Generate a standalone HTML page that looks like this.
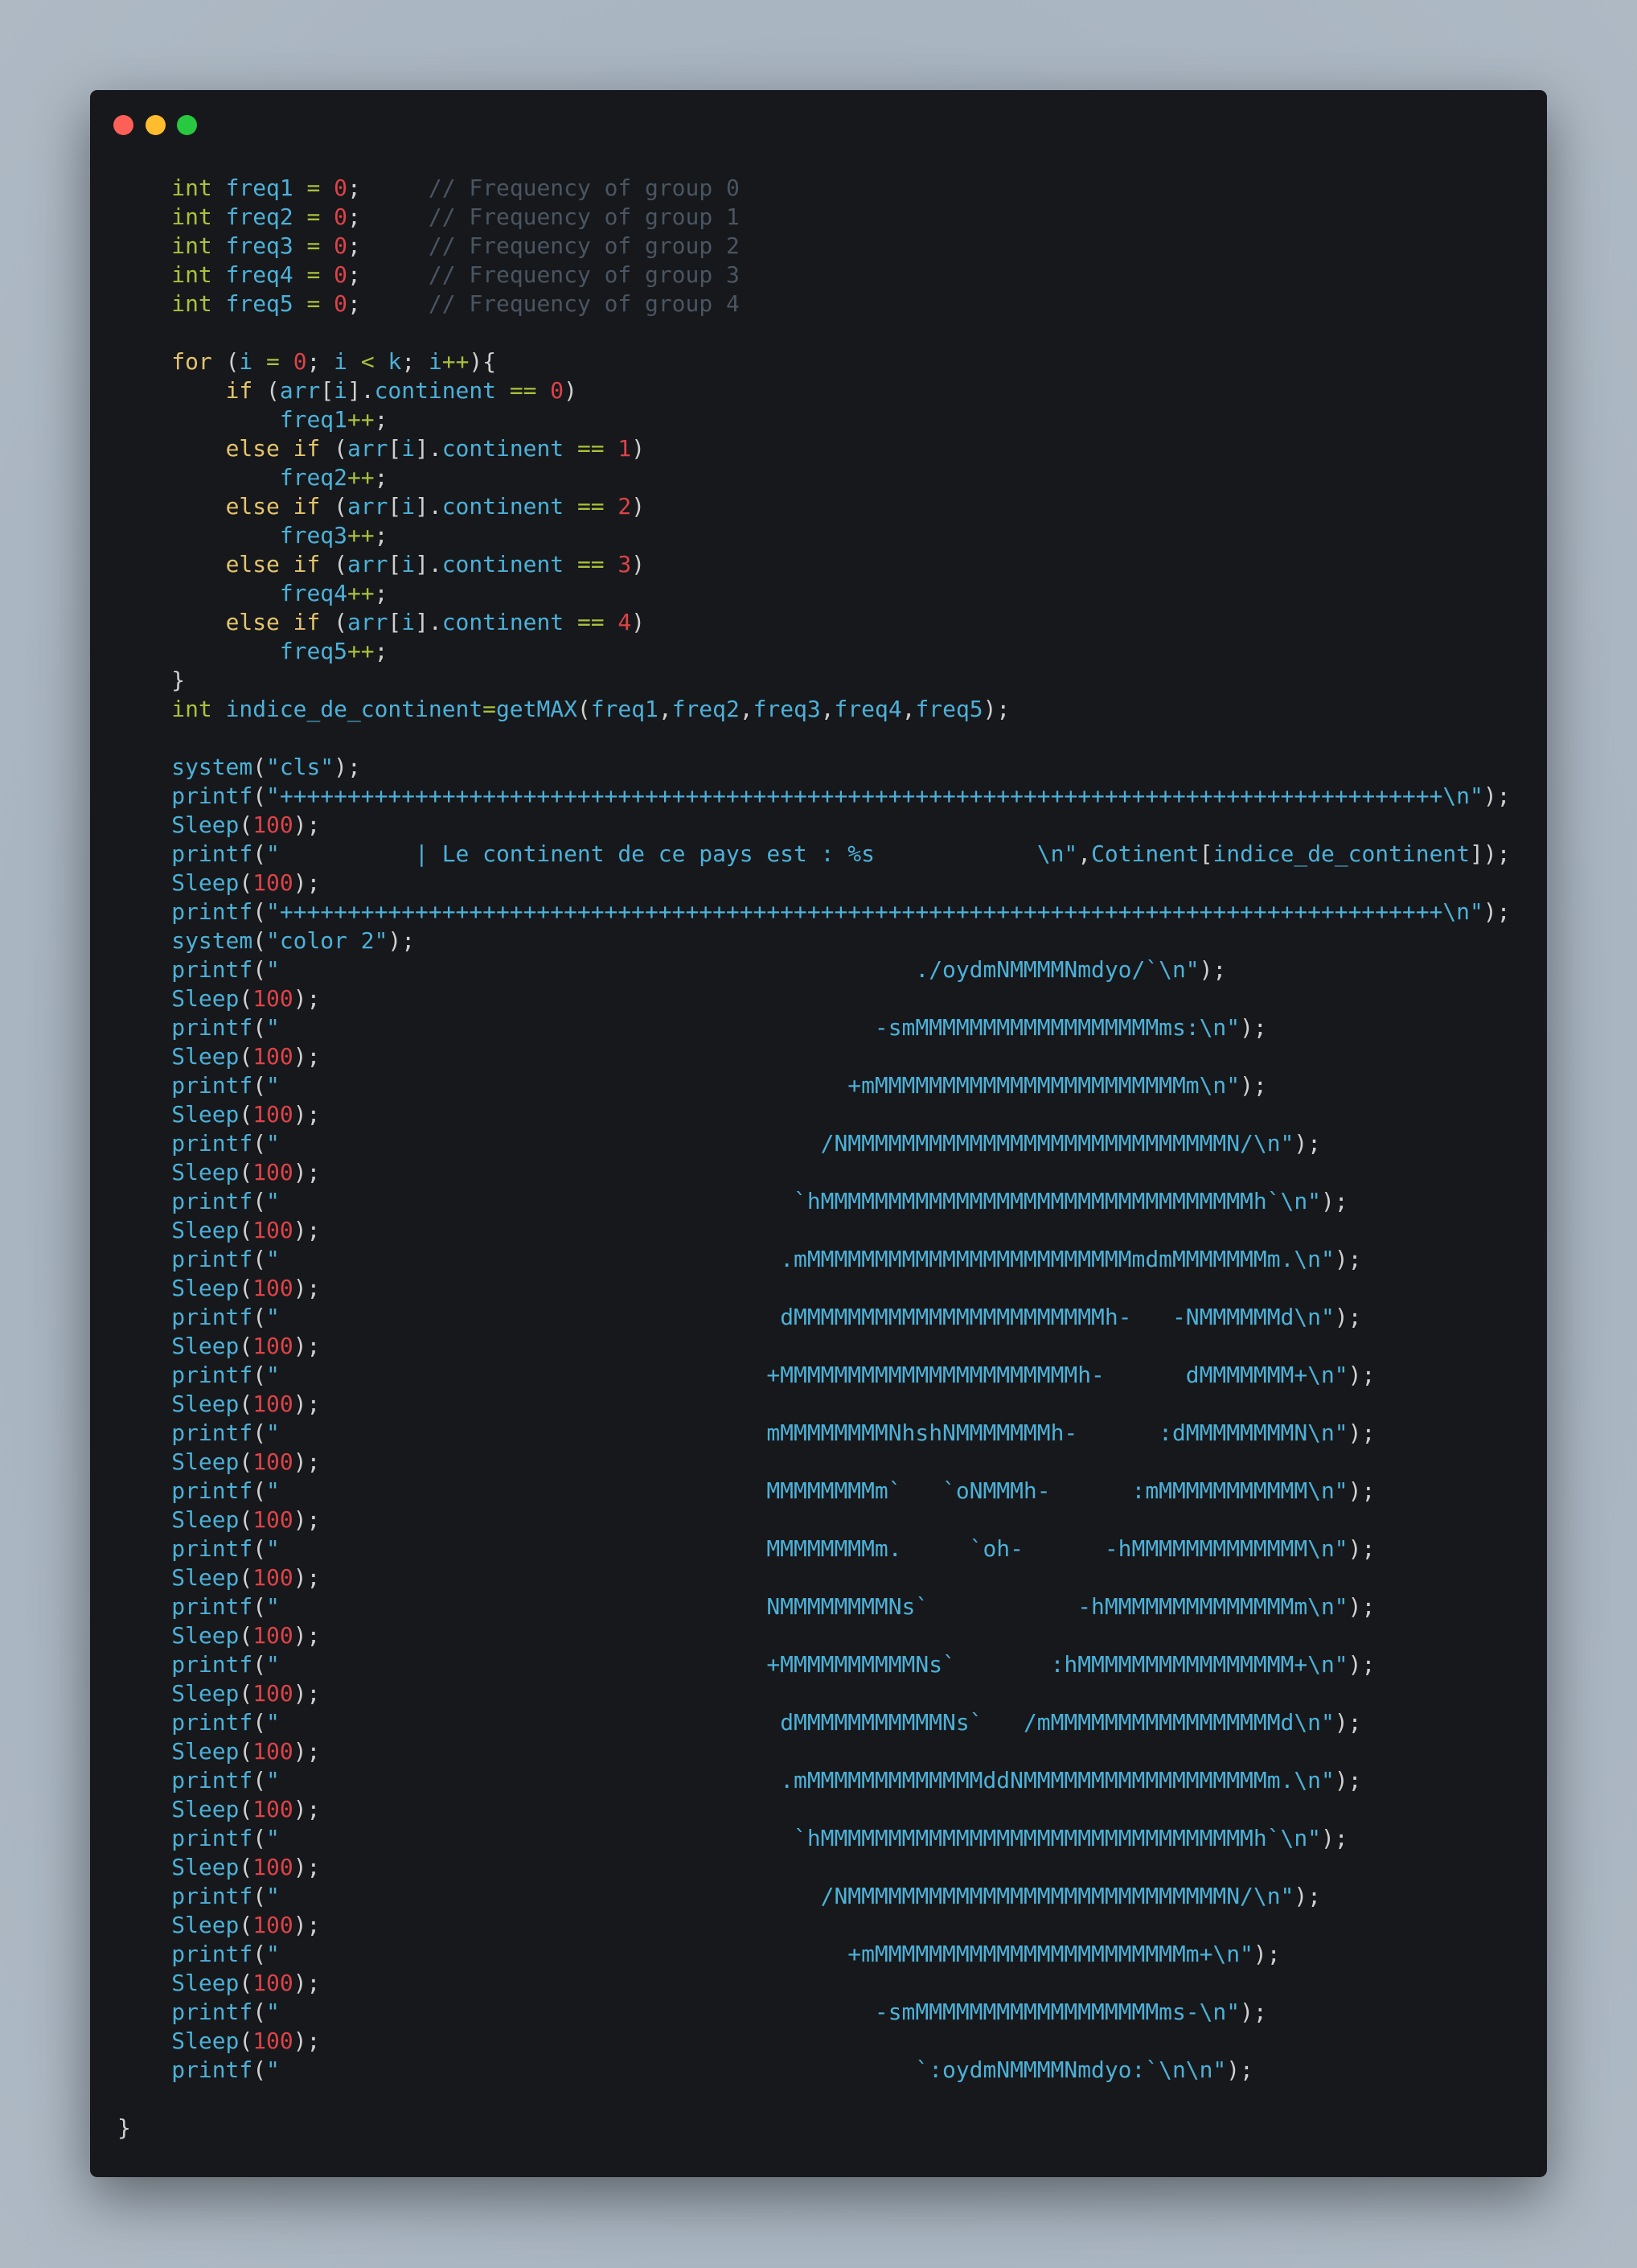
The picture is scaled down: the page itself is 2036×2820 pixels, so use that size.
<!DOCTYPE html>
<html><head><meta charset="utf-8"><style>
html,body{margin:0;padding:0}
body{width:2036px;height:2820px;background:radial-gradient(ellipse at 50% 50%,#98a4b0 0%,#a9b5c1 70%,#aeb9c4 100%);position:relative;overflow:hidden}
.win{position:absolute;left:112px;top:112px;width:1812px;height:2595px;background:#17181b;border-radius:9px;box-shadow:0 25px 70px rgba(0,0,0,.45)}
.dot{position:absolute;top:143px;width:25px;height:25px;border-radius:50%}
pre{position:absolute;left:146px;top:216px;margin:0;font-family:"DejaVu Sans Mono","Liberation Mono",monospace;font-size:27.95px;line-height:36px;color:#d0d0d0}
i{display:inline-block;font-style:normal}
.k{color:#a8c23c}.y{color:#e3c46c}.b{color:#4cb1d9}.r{color:#dc4348}.g{color:#a8c23c}.c{color:#4a5562}.w{color:#d0d0d0}
</style></head><body>
<div class="win"></div>
<div class="dot" style="left:141px;background:#fe5f57"></div>
<div class="dot" style="left:181px;background:#febc2e"></div>
<div class="dot" style="left:220px;background:#28c840"></div>
<pre>    <span class="k">int</span> <span class="b">freq1</span> <span class="g">=</span> <span class="r">0</span>;     <span class="c">// Frequency of group 0</span>
    <span class="k">int</span> <span class="b">freq2</span> <span class="g">=</span> <span class="r">0</span>;     <span class="c">// Frequency of group 1</span>
    <span class="k">int</span> <span class="b">freq3</span> <span class="g">=</span> <span class="r">0</span>;     <span class="c">// Frequency of group 2</span>
    <span class="k">int</span> <span class="b">freq4</span> <span class="g">=</span> <span class="r">0</span>;     <span class="c">// Frequency of group 3</span>
    <span class="k">int</span> <span class="b">freq5</span> <span class="g">=</span> <span class="r">0</span>;     <span class="c">// Frequency of group 4</span>

    <span class="y">for</span> (<span class="b">i</span> <span class="g">=</span> <span class="r">0</span>; <span class="b">i</span> <span class="g">&lt;</span> <span class="b">k</span>; <span class="b">i</span><span class="g">++</span>){
        <span class="y">if</span> (<span class="b">arr</span>[<span class="b">i</span>].<span class="b">continent</span> <span class="g">==</span> <span class="r">0</span>)
            <span class="b">freq1</span><span class="g">++</span>;
        <span class="y">else if</span> (<span class="b">arr</span>[<span class="b">i</span>].<span class="b">continent</span> <span class="g">==</span> <span class="r">1</span>)
            <span class="b">freq2</span><span class="g">++</span>;
        <span class="y">else if</span> (<span class="b">arr</span>[<span class="b">i</span>].<span class="b">continent</span> <span class="g">==</span> <span class="r">2</span>)
            <span class="b">freq3</span><span class="g">++</span>;
        <span class="y">else if</span> (<span class="b">arr</span>[<span class="b">i</span>].<span class="b">continent</span> <span class="g">==</span> <span class="r">3</span>)
            <span class="b">freq4</span><span class="g">++</span>;
        <span class="y">else if</span> (<span class="b">arr</span>[<span class="b">i</span>].<span class="b">continent</span> <span class="g">==</span> <span class="r">4</span>)
            <span class="b">freq5</span><span class="g">++</span>;
    }
    <span class="k">int</span> <span class="b">indice_de_continent</span><span class="g">=</span><span class="b">getMAX</span>(<span class="b">freq1</span>,<span class="b">freq2</span>,<span class="b">freq3</span>,<span class="b">freq4</span>,<span class="b">freq5</span>);

    <span class="b">system</span>(<span class="b">"cls"</span>);
    <span class="b">printf</span>(<span class="b">"++++++++++++++++++++++++++++++++++++++++++++++++++++++++++++++++++++++++++++++++++++++\n"</span>);
    <span class="b">Sleep</span>(<span class="r">100</span>);
    <span class="b">printf</span>(<span class="b">"          | Le continent de ce pays est : %s            \n"</span>,<span class="b">Cotinent</span>[<span class="b">indice_de_continent</span>]);
    <span class="b">Sleep</span>(<span class="r">100</span>);
    <span class="b">printf</span>(<span class="b">"++++++++++++++++++++++++++++++++++++++++++++++++++++++++++++++++++++++++++++++++++++++\n"</span>);
    <span class="b">system</span>(<span class="b">"color 2"</span>);
    <span class="b">printf</span>(<span class="b">"<i style="width:47ch"></i>./oydmNMMMMNmdyo/`\n"</span>);
    <span class="b">Sleep</span>(<span class="r">100</span>);
    <span class="b">printf</span>(<span class="b">"<i style="width:44ch"></i>-smMMMMMMMMMMMMMMMMMMms:\n"</span>);
    <span class="b">Sleep</span>(<span class="r">100</span>);
    <span class="b">printf</span>(<span class="b">"<i style="width:42ch"></i>+mMMMMMMMMMMMMMMMMMMMMMMMm\n"</span>);
    <span class="b">Sleep</span>(<span class="r">100</span>);
    <span class="b">printf</span>(<span class="b">"<i style="width:40ch"></i>/NMMMMMMMMMMMMMMMMMMMMMMMMMMMMN/\n"</span>);
    <span class="b">Sleep</span>(<span class="r">100</span>);
    <span class="b">printf</span>(<span class="b">"<i style="width:38ch"></i>`hMMMMMMMMMMMMMMMMMMMMMMMMMMMMMMMMh`\n"</span>);
    <span class="b">Sleep</span>(<span class="r">100</span>);
    <span class="b">printf</span>(<span class="b">"<i style="width:37ch"></i>.mMMMMMMMMMMMMMMMMMMMMMMMMmdmMMMMMMMm.\n"</span>);
    <span class="b">Sleep</span>(<span class="r">100</span>);
    <span class="b">printf</span>(<span class="b">"<i style="width:37ch"></i>dMMMMMMMMMMMMMMMMMMMMMMMh-   -NMMMMMMd\n"</span>);
    <span class="b">Sleep</span>(<span class="r">100</span>);
    <span class="b">printf</span>(<span class="b">"<i style="width:36ch"></i>+MMMMMMMMMMMMMMMMMMMMMMh-      dMMMMMMM+\n"</span>);
    <span class="b">Sleep</span>(<span class="r">100</span>);
    <span class="b">printf</span>(<span class="b">"<i style="width:36ch"></i>mMMMMMMMMNhshNMMMMMMMh-      :dMMMMMMMMN\n"</span>);
    <span class="b">Sleep</span>(<span class="r">100</span>);
    <span class="b">printf</span>(<span class="b">"<i style="width:36ch"></i>MMMMMMMMm`   `oNMMMh-      :mMMMMMMMMMMM\n"</span>);
    <span class="b">Sleep</span>(<span class="r">100</span>);
    <span class="b">printf</span>(<span class="b">"<i style="width:36ch"></i>MMMMMMMMm.     `oh-      -hMMMMMMMMMMMMM\n"</span>);
    <span class="b">Sleep</span>(<span class="r">100</span>);
    <span class="b">printf</span>(<span class="b">"<i style="width:36ch"></i>NMMMMMMMMNs`           -hMMMMMMMMMMMMMMm\n"</span>);
    <span class="b">Sleep</span>(<span class="r">100</span>);
    <span class="b">printf</span>(<span class="b">"<i style="width:36ch"></i>+MMMMMMMMMMNs`       :hMMMMMMMMMMMMMMMM+\n"</span>);
    <span class="b">Sleep</span>(<span class="r">100</span>);
    <span class="b">printf</span>(<span class="b">"<i style="width:37ch"></i>dMMMMMMMMMMMNs`   /mMMMMMMMMMMMMMMMMMd\n"</span>);
    <span class="b">Sleep</span>(<span class="r">100</span>);
    <span class="b">printf</span>(<span class="b">"<i style="width:37ch"></i>.mMMMMMMMMMMMMMddNMMMMMMMMMMMMMMMMMMm.\n"</span>);
    <span class="b">Sleep</span>(<span class="r">100</span>);
    <span class="b">printf</span>(<span class="b">"<i style="width:38ch"></i>`hMMMMMMMMMMMMMMMMMMMMMMMMMMMMMMMMh`\n"</span>);
    <span class="b">Sleep</span>(<span class="r">100</span>);
    <span class="b">printf</span>(<span class="b">"<i style="width:40ch"></i>/NMMMMMMMMMMMMMMMMMMMMMMMMMMMMN/\n"</span>);
    <span class="b">Sleep</span>(<span class="r">100</span>);
    <span class="b">printf</span>(<span class="b">"<i style="width:42ch"></i>+mMMMMMMMMMMMMMMMMMMMMMMMm+\n"</span>);
    <span class="b">Sleep</span>(<span class="r">100</span>);
    <span class="b">printf</span>(<span class="b">"<i style="width:44ch"></i>-smMMMMMMMMMMMMMMMMMMms-\n"</span>);
    <span class="b">Sleep</span>(<span class="r">100</span>);
    <span class="b">printf</span>(<span class="b">"<i style="width:47ch"></i>`:oydmNMMMMNmdyo:`\n\n"</span>);

}</pre>
</body></html>
